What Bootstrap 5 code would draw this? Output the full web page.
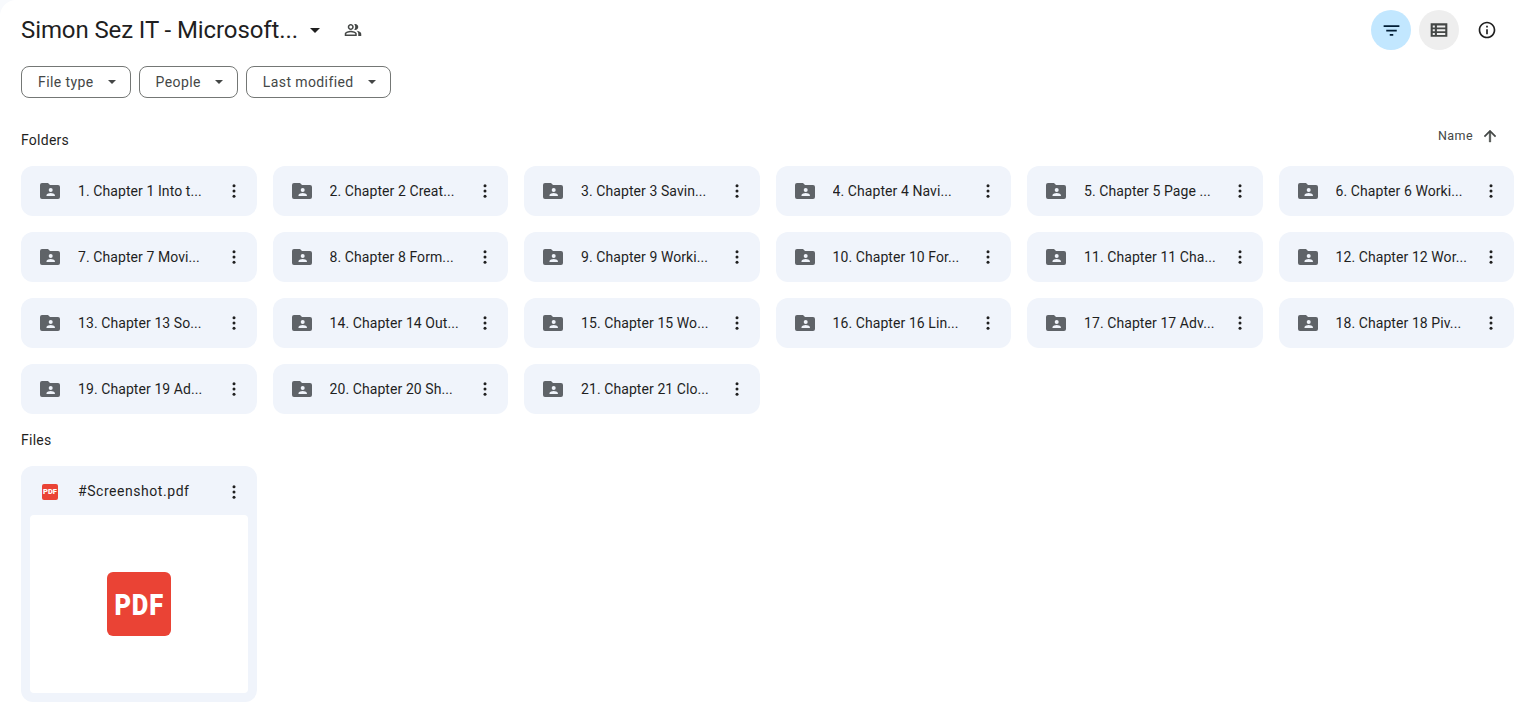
<!DOCTYPE html>
<html lang="en">
<head>
    <meta charset="UTF-8">
    <title>Simon Sez IT - Microsoft Excel</title>
    <meta name="viewport" content="width=device-width, initial-scale=1">
    <link href="https://cdn.jsdelivr.net/npm/bootstrap@5.3.0/dist/css/bootstrap.min.css" rel="stylesheet">
    <style>
        body {
            background: #f8fafd;
            color: #1f1f1f;
            font-family: Roboto, "Liberation Sans", sans-serif;
            font-size: 14px;
            overflow: hidden;
        }

        .drive-page {
            height: 713px;
            padding: 0 10px 0 21px;
            background: #fff;
            border-top-left-radius: 16px;
        }

        .title-row {
            height: 60px;
        }

        .folder-title {
            font-size: 24px;
            line-height: 28px;
            letter-spacing: -.1px;
            color: #1f1f1f;
            width: 281px;
            white-space: nowrap;
        }

        .caret-down {
            width: 0;
            height: 0;
            border-left: 5px solid transparent;
            border-right: 5px solid transparent;
            border-top: 5px solid #1f1f1f;
        }

        .caret-small {
            border-left-width: 4px;
            border-right-width: 4px;
            border-top-width: 4px;
            border-top-color: #444746;
        }

        .round-btn {
            width: 40px;
            height: 40px;
            border-radius: 50%;
            border: 0;
            padding: 0;
            background: transparent;
        }

        .round-filter { background: #c2e7ff; }
        .round-list { background: #eeeeee; }

        .top-actions {
            margin-right: 7px;
        }

        .chip-row {
            height: 32px;
            margin-top: 6px;
        }

        .filter-chip {
            height: 32px;
            padding: 0 14px 0 16px;
            border: 1px solid #747775;
            border-radius: 8px;
            background: #fff;
            color: #444746;
            font-size: 14px;
            letter-spacing: .4px;
            gap: 14px;
        }

        .section-head {
            font-size: 14px;
            color: #1f1f1f;
            line-height: 20px;
            letter-spacing: .25px;
        }

        .folders-head {
            height: 20px;
            margin-top: 32px;
        }

        .sort-label {
            font-size: 12.5px;
            color: #444746;
            letter-spacing: .45px;
            margin: 0 7px 9px 0;
        }

        .item-grid {
            display: grid;
            grid-template-columns: repeat(6, 1fr);
            gap: 16px;
        }

        .folders-grid { margin-top: 16px; }

        .drive-item {
            height: 50px;
            background: #f0f4fb;
            border-radius: 12px;
            padding: 0 14px 0 17px;
        }

        .item-name {
            flex: 1;
            margin-left: 16px;
            white-space: nowrap;
            overflow: hidden;
            text-overflow: ellipsis;
            font-size: 14px;
            letter-spacing: .08px;
            color: #1f1f1f;
        }

        .files-head { margin-top: 16px; }

        .file-card {
            margin-top: 16px;
            height: 236px;
            background: #f0f4fb;
            border-radius: 12px;
            padding: 0 9px 9px;
        }

        .file-top {
            height: 49px;
            padding: 2px 5px 0 12px;
        }

        .file-top .item-name {
            margin-left: 20px;
            letter-spacing: .55px;
        }

        .pdf-mini {
            width: 16px;
            height: 16px;
            background: #ea4335;
            border-radius: 2px;
            color: #fff;
            font-size: 7.5px;
            font-weight: 900;
            line-height: 16px;
            text-align: center;
        }

        .file-preview {
            height: 178px;
            background: #fff;
            border-radius: 4px;
        }

        .pdf-big {
            width: 64px;
            height: 64px;
            background: #ea4335;
            border-radius: 6px;
            color: #fff;
            font-size: 30px;
            font-weight: 900;
            letter-spacing: 1px;
        }

        .pdf-big span {
            transform: scaleX(.85);
        }
    </style>
</head>
<body>

<svg class="d-none">
    <symbol id="ic-folder" viewBox="0 0 24 24">
        <path fill="#5f6368" d="M4 4h6l2 2h8a2 2 0 0 1 2 2v10a2 2 0 0 1-2 2H4a2 2 0 0 1-2-2V6a2 2 0 0 1 2-2z"/>
        <circle cx="12.700" cy="11" r="2" fill="#f0f4fb"/>
        <path fill="#f0f4fb" d="M8.500 17v-1c0-1.400 2.800-2.100 4.200-2.100s4.200 .7 4.200 2.100v1z"/>
    </symbol>
    <symbol id="ic-more" viewBox="0 0 24 24">
        <circle cx="12" cy="5" r="2" fill="#1f1f1f"/>
        <circle cx="12" cy="12" r="2" fill="#1f1f1f"/>
        <circle cx="12" cy="19" r="2" fill="#1f1f1f"/>
    </symbol>
</svg>

<div class="drive-page">
    <div class="title-row d-flex align-items-center">
        <div class="folder-title">Simon Sez IT - Microsoft...</div>
        <span class="caret-down ms-2"></span>
        <svg class="ms-4" width="18" height="18" viewBox="0 0 24 24" fill="#444746">
            <path d="M16.670 13.130C18.040 14.060 19 15.320 19 17v3h4v-3c0-2.180-3.570-3.470-6.330-3.870zM15 12c2.210 0 4-1.790 4-4s-1.790-4-4-4c-.47 0-.91.1-1.330.24C14.500 5.270 15 6.580 15 8s-.5 2.730-1.330 3.760c.42.14.86.24 1.330.24zM9 12c2.210 0 4-1.790 4-4s-1.790-4-4-4-4 1.790-4 4 1.790 4 4 4zm0-6c1.100 0 2 .9 2 2s-.9 2-2 2-2-.9-2-2 .9-2 2-2zM9 13c-2.670 0-8 1.340-8 4v3h16v-3c0-2.660-5.330-4-8-4zm6 5H3v-.99C3.200 16.290 6.300 15 9 15s5.800 1.290 6 2v1z"/>
        </svg>
        <div class="top-actions ms-auto d-flex align-items-center gap-2">
            <button class="round-btn round-filter d-flex align-items-center justify-content-center">
                <svg width="21" height="21" viewBox="0 0 24 24" fill="#001d35"><path d="M10 18h4v-2h-4v2zM3 6v2h18V6H3zm3 7h12v-2H6v2z"/></svg>
            </button>
            <button class="round-btn round-list d-flex align-items-center justify-content-center">
                <svg width="20" height="20" viewBox="0 0 24 24" fill="#444746"><path d="M2 4h20v16H2zm2.500 2.500v2.500h2.500V6.500zm5 0v2.500h10V6.500zm-5 4.500v2.500h2.500V11zm5 0v2.500h10V11zm-5 4.500V18h2.500v-2.500zm5 0V18h10v-2.500z" fill-rule="evenodd"/></svg>
            </button>
            <button class="round-btn d-flex align-items-center justify-content-center">
                <svg width="20" height="20" viewBox="0 0 24 24" fill="#1f1f1f"><path d="M11 7h2v2h-2zm0 4h2v6h-2zm1-9C6.480 2 2 6.480 2 12s4.480 10 10 10 10-4.480 10-10S17.520 2 12 2zm0 18c-4.410 0-8-3.590-8-8s3.590-8 8-8 8 3.590 8 8-3.590 8-8 8z"/></svg>
            </button>
        </div>
    </div>

    <div class="chip-row d-flex gap-2">
        <button class="filter-chip d-flex align-items-center">File type<span class="caret-down caret-small"></span></button>
        <button class="filter-chip d-flex align-items-center">People<span class="caret-down caret-small"></span></button>
        <button class="filter-chip d-flex align-items-center">Last modified<span class="caret-down caret-small"></span></button>
    </div>

    <div class="folders-head section-head d-flex align-items-center justify-content-between">
        <span>Folders</span>
        <span class="d-flex align-items-center sort-label">Name
            <svg class="ms-2 me-2" width="18" height="18" viewBox="0 0 24 24" fill="#444746" stroke="#444746" stroke-width=".6"><path d="M4 12l1.410 1.410L11 7.830V20h2V7.830l5.580 5.590L20 12l-8-8-8 8z"/></svg>
        </span>
    </div>

    <div id="folders" class="item-grid folders-grid"></div>

    <div class="files-head section-head">Files</div>

    <div class="item-grid">
        <div class="file-card">
            <div class="file-top d-flex align-items-center">
                <span class="pdf-mini">PDF</span>
                <span class="item-name">#Screenshot.pdf</span>
                <svg width="18" height="18"><use href="#ic-more"/></svg>
            </div>
            <div class="file-preview d-flex align-items-center justify-content-center">
                <div class="pdf-big d-flex align-items-center justify-content-center"><span>PDF</span></div>
            </div>
        </div>
    </div>
</div>

<script src="https://cdn.jsdelivr.net/npm/bootstrap@5.3.0/dist/js/bootstrap.bundle.min.js"></script>
<script>
    const folders = [
        "1. Chapter 1 Into t...", "2. Chapter 2 Creat...", "3. Chapter 3 Savin...", "4. Chapter 4 Navi...",
        "5. Chapter 5 Page ...", "6. Chapter 6 Worki...", "7. Chapter 7 Movi...", "8. Chapter 8 Form...",
        "9. Chapter 9 Worki...", "10. Chapter 10 For...", "11. Chapter 11 Cha...", "12. Chapter 12 Wor...",
        "13. Chapter 13 So...", "14. Chapter 14 Out...", "15. Chapter 15 Wo...", "16. Chapter 16 Lin...",
        "17. Chapter 17 Adv...", "18. Chapter 18 Piv...", "19. Chapter 19 Ad...", "20. Chapter 20 Sh...",
        "21. Chapter 21 Clo..."
    ];

    document.getElementById("folders").innerHTML = folders.map(name =>
        '<div class="drive-item d-flex align-items-center">' +
        '<svg width="24" height="24"><use href="#ic-folder"/></svg>' +
        '<span class="item-name">' + name + '</span>' +
        '<svg width="18" height="18"><use href="#ic-more"/></svg>' +
        '</div>'
    ).join("");
</script>
</body>
</html>
